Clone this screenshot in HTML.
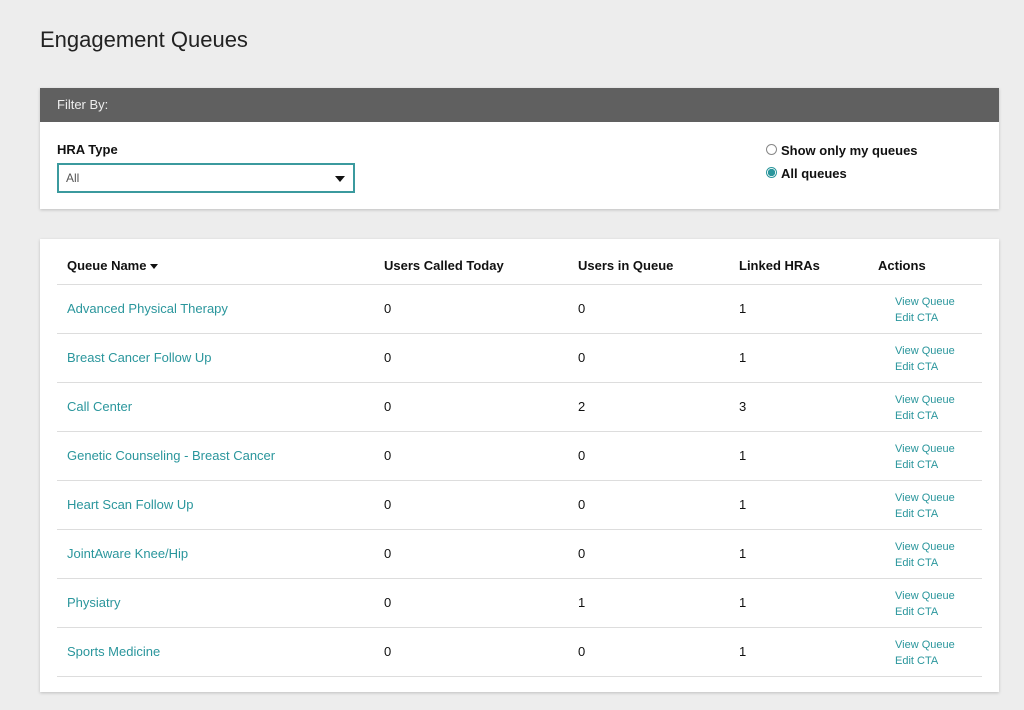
<!DOCTYPE html>
<html><head><style>
body{margin:0;background:#ededed;font-family:"Liberation Sans",sans-serif;width:1024px;height:710px;overflow:hidden;position:relative;color:#111}
.a{position:absolute}
h1{position:absolute;left:40px;top:27px;margin:0;font-size:22px;font-weight:normal;color:#222}
.card{position:absolute;left:40px;width:959px;background:#fff;box-shadow:0 1px 3px rgba(0,0,0,.2)}
.fh{height:34px;background:#606060;color:#eee;font-size:13px;line-height:34px;padding-left:17px}
.lbl{font-weight:bold;font-size:13px}
.sel{position:absolute;left:17px;top:75px;width:287px;height:26px;border:2px solid #3b9a9e;font-size:12px;color:#555;line-height:26px;padding-left:7px;box-sizing:content-box}
.tri{position:absolute;right:8px;top:11px;border-left:5px solid transparent;border-right:5px solid transparent;border-top:6px solid #111}
.radio{position:absolute;width:9px;height:9px;border:1px solid #888;border-radius:50%;background:#fff}
.row{position:absolute;left:17px;width:925px;height:49px;border-top:1px solid #ddd;font-size:13px}
.row span{position:absolute;top:16px}
.t{color:#2a969c}
.act{position:absolute;left:838px;top:9px;font-size:11px;line-height:16px;color:#2a969c}
.th{position:absolute;top:19px;font-weight:bold;font-size:13px}
</style></head><body>
<h1>Engagement Queues</h1>
<div class="card" style="top:88px;height:121px">
<div class="fh">Filter By:</div>
<div class="a lbl" style="left:17px;top:54px">HRA Type</div>
<div class="sel">All<div class="tri"></div></div>
<div class="radio" style="left:726px;top:56px"></div>
<div class="a lbl" style="left:741px;top:55px">Show only my queues</div>
<div class="radio" style="left:726px;top:79px;border-color:#2a969c;background:radial-gradient(circle,#2a969c 55%,#fff 60%)"></div>
<div class="a lbl" style="left:741px;top:78px">All queues</div>
</div>
<div class="card" style="top:239px;height:453px">
<div class="th" style="left:27px">Queue Name <span style="display:inline-block;border-left:4px solid transparent;border-right:4px solid transparent;border-top:5px solid #111;vertical-align:middle"></span></div>
<div class="th" style="left:344px">Users Called Today</div>
<div class="th" style="left:538px">Users in Queue</div>
<div class="th" style="left:699px">Linked HRAs</div>
<div class="th" style="left:838px">Actions</div>
<div class="row" style="top:45px"><span class="t" style="left:10px">Advanced Physical Therapy</span><span style="left:327px">0</span><span style="left:521px">0</span><span style="left:682px">1</span><div class="act">View Queue<br>Edit CTA</div></div>
<div class="row" style="top:94px"><span class="t" style="left:10px">Breast Cancer Follow Up</span><span style="left:327px">0</span><span style="left:521px">0</span><span style="left:682px">1</span><div class="act">View Queue<br>Edit CTA</div></div>
<div class="row" style="top:143px"><span class="t" style="left:10px">Call Center</span><span style="left:327px">0</span><span style="left:521px">2</span><span style="left:682px">3</span><div class="act">View Queue<br>Edit CTA</div></div>
<div class="row" style="top:192px"><span class="t" style="left:10px">Genetic Counseling - Breast Cancer</span><span style="left:327px">0</span><span style="left:521px">0</span><span style="left:682px">1</span><div class="act">View Queue<br>Edit CTA</div></div>
<div class="row" style="top:241px"><span class="t" style="left:10px">Heart Scan Follow Up</span><span style="left:327px">0</span><span style="left:521px">0</span><span style="left:682px">1</span><div class="act">View Queue<br>Edit CTA</div></div>
<div class="row" style="top:290px"><span class="t" style="left:10px">JointAware Knee/Hip</span><span style="left:327px">0</span><span style="left:521px">0</span><span style="left:682px">1</span><div class="act">View Queue<br>Edit CTA</div></div>
<div class="row" style="top:339px"><span class="t" style="left:10px">Physiatry</span><span style="left:327px">0</span><span style="left:521px">1</span><span style="left:682px">1</span><div class="act">View Queue<br>Edit CTA</div></div>
<div class="row" style="top:388px"><span class="t" style="left:10px">Sports Medicine</span><span style="left:327px">0</span><span style="left:521px">0</span><span style="left:682px">1</span><div class="act">View Queue<br>Edit CTA</div></div>
<div class="row" style="top:437px;height:0"></div>
</div>
</body></html>
